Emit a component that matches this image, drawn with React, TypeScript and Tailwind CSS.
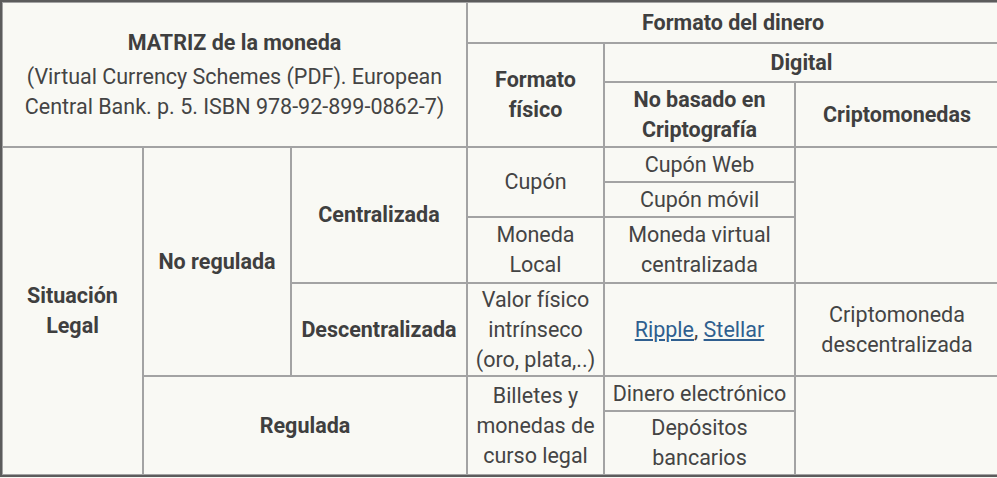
import React from 'react';

const cell = 'border border-[#a3a3a3] px-1 py-0 text-center align-middle';
const head = `${cell} font-bold text-[#3f3f3f]`;

const Link = ({ children }: { children: React.ReactNode }) => (
  <a href="#" className="text-[#2f5f8f] underline underline-offset-2">
    {children}
  </a>
);

export default function App() {
  return (
    <div className="w-[997px] h-[478px] bg-[#f9f9f4] font-['Roboto',sans-serif] text-[21.5px] leading-[30px] text-[#444]">
      <table className="w-[997px] table-fixed border-separate border-spacing-0 border-2 border-[#5c5c5c] bg-[#f9f9f4]">
        <colgroup>
          <col className="w-[141px]" />
          <col className="w-[148px]" />
          <col className="w-[176px]" />
          <col className="w-[137px]" />
          <col className="w-[191px]" />
          <col className="w-[204px]" />
        </colgroup>
        <tbody>
          <tr className="h-[41px]">
            <td rowSpan={3} colSpan={3} className={cell}>
              <div className="font-bold text-[#3f3f3f] mb-1">MATRIZ de la moneda</div>
              <div>
                (Virtual Currency Schemes (PDF). European
                <br />
                Central Bank. p. 5. ISBN 978-92-899-0862-7)
              </div>
            </td>
            <th colSpan={3} className={head}>Formato del dinero</th>
          </tr>
          <tr className="h-[39px]">
            <th rowSpan={2} className={head}>
              Formato
              <br />
              físico
            </th>
            <th colSpan={2} className={head}>Digital</th>
          </tr>
          <tr className="h-[65px]">
            <th className={head}>
              No basado en
              <br />
              Criptografía
            </th>
            <th className={head}>Criptomonedas</th>
          </tr>

          <tr className="h-[35px]">
            <td rowSpan={6} className={head}>
              Situación
              <br />
              Legal
            </td>
            <td rowSpan={4} className={head}>No regulada</td>
            <td rowSpan={3} className={head}>Centralizada</td>
            <td rowSpan={2} className={cell}>Cupón</td>
            <td className={cell}>Cupón Web</td>
            <td rowSpan={3} className={cell}></td>
          </tr>
          <tr className="h-[35px]">
            <td className={cell}>Cupón móvil</td>
          </tr>
          <tr className="h-[66px]">
            <td className={cell}>
              Moneda
              <br />
              Local
            </td>
            <td className={cell}>
              Moneda virtual
              <br />
              centralizada
            </td>
          </tr>
          <tr className="h-[93px]">
            <td className={head}>Descentralizada</td>
            <td className={cell}>
              Valor físico
              <br />
              intrínseco
              <br />
              (oro, plata,..)
            </td>
            <td className={cell}>
              <Link>Ripple</Link>, <Link>Stellar</Link>
            </td>
            <td className={cell}>
              Criptomoneda
              <br />
              descentralizada
            </td>
          </tr>
          <tr className="h-[35px]">
            <td rowSpan={2} colSpan={2} className={head}>Regulada</td>
            <td rowSpan={2} className={cell}>
              Billetes y
              <br />
              monedas de
              <br />
              curso legal
            </td>
            <td className={cell}>Dinero electrónico</td>
            <td rowSpan={2} className={cell}></td>
          </tr>
          <tr className="h-[64px]">
            <td className={cell}>
              Depósitos
              <br />
              bancarios
            </td>
          </tr>
        </tbody>
      </table>
    </div>
  );
}
